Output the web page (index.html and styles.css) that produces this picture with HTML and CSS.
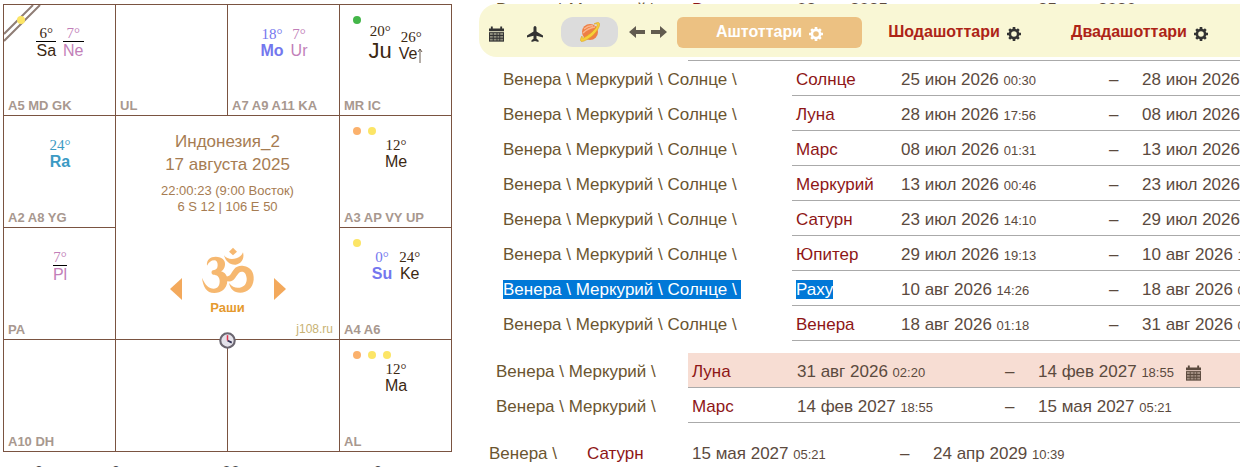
FILE: index.html
```
<!DOCTYPE html>
<html lang="ru">
<head>
  <meta charset="UTF-8">
  <meta name="viewport" content="width=device-width, initial-scale=1.0">
  <title>Индонезия_2</title>
  <link rel="stylesheet" href="styles.css">
</head>
<body>
  <svg class="sprite" aria-hidden="true">
    <symbol id="calendar" viewBox="0 0 16 16">
      <path d="M0 2h2V0h2v2h8V0h2v2h2v3H0z"/>
      <path d="M0 6h16v10H0z" opacity=".55"/>
      <path d="M0 6h1v10H0zM4 6h1v10H4zM8 6h1v10H8zM11 6h1v10h-1zM15 6h1v10h-1zM0 6h16v1H0zM0 9h16v1H0zM0 12h16v1H0zM0 15h16v1H0z"/>
    </symbol>
    <symbol id="gear" viewBox="0 0 16 16">
      <circle cx="8" cy="8" r="4.7" fill="none" stroke="currentColor" stroke-width="3"/>
      <path d="M8 0v3M8 13v3M0 8h3M13 8h3M2.500 2.500l2 2M11.500 11.500l2 2M13.500 2.500l-2 2M4.500 11.500l-2 2" stroke="currentColor" stroke-width="3"/>
    </symbol>
  </svg>

  <div class="page">
    <div class="left">
      <div class="chart">
        <div class="cell">
          <svg class="asc" viewBox="0 0 38 38"><path d="M0 29L29 0M0 36L36 0"/></svg>
          <div class="dots"><i class="yellow"></i></div>
          <div class="planets">
            <div class="planet retro"><span>6°</span><b>Sa</b></div>
            <div class="planet outer retro"><span>7°</span><b>Ne</b></div>
          </div>
          <div class="labels">A5 MD GK</div>
        </div>
        <div class="cell">
          <div class="labels">UL</div>
        </div>
        <div class="cell">
          <div class="planets">
            <div class="planet blue"><span>18°</span><b>Mo</b></div>
            <div class="planet outer"><span>7°</span><b>Ur</b></div>
          </div>
          <div class="labels">A7 A9 A11 KA</div>
        </div>
        <div class="cell">
          <div class="dots"><i class="green"></i></div>
          <div class="planets">
            <div class="planet big"><span>20°</span><b>Ju</b></div>
            <div class="planet"><span>26°</span><b>Ve<svg class="up" viewBox="0 0 6 16"><path d="M3 16V2M1 5l2-3 2 3"/></svg></b></div>
          </div>
          <div class="labels">MR IC</div>
        </div>
        <div class="cell">
          <div class="planets">
            <div class="planet teal"><span>24°</span><b>Ra</b></div>
          </div>
          <div class="labels">A2 A8 YG</div>
        </div>
        <div class="center">
          <div class="name">Индонезия_2<br>17 августа 2025</div>
          <div class="place">22:00:23 (9:00 Восток)<br>6 S 12 | 106 E 50</div>
          <div class="switch">
            <button aria-label="Назад"><svg width="12" height="22" viewBox="0 0 12 22"><path d="M12 0v22L0 11z"/></svg></button>
            <svg class="om" viewBox="30 20 162 141">
              <path d="M48 76C46 58 58 49 74 49C94 49 104 60 102 74C101 84 96 90 90 93C102 96 110 106 109 122C108 146 90 158 70 158C46 158 36 138 33 112C42 134 54 145 68 145C80 145 86 136 86 122C86 109 78 103 66 103C60 101 60 92 66 90C76 89 80 84 80 74C80 65 76 60 70 60C60 60 54 66 48 76Z"/>
              <path d="M104 108C118 110 120 98 128 88C136 78 146 75 158 77C178 79 190 96 188 118C186 142 168 157 148 157C128 157 118 146 114 128C124 140 134 144 146 142C160 140 168 130 167 114C166 101 160 93 152 94C140 95 136 112 126 120C118 125 110 124 106 121Z"/>
              <path d="M99 45C107 56 122 59 136 54C146 50 153 45 156 36C161 54 152 71 134 73C116 74 104 63 99 45Z"/>
              <path d="M126 22l12 12-12 11-12-11z"/>
            </svg>
            <button aria-label="Вперёд"><svg width="12" height="22" viewBox="0 0 12 22"><path d="M0 0v22l12-11z"/></svg></button>
          </div>
          <div class="varga">Раши</div>
          <div class="site">j108.ru</div>
          <svg class="clock" viewBox="0 0 16 16">
            <circle cx="8" cy="8" r="6.8" fill="#e4e2ea" stroke="#6b6670" stroke-width="2"/>
            <path d="M8 8l4 2" stroke="#333355" stroke-width="1.6"/>
            <path d="M8 8V3" stroke="#e0344c" stroke-width="1.4"/>
          </svg>
        </div>
        <div class="cell">
          <div class="dots"><i class="orange"></i><i class="yellow"></i></div>
          <div class="planets">
            <div class="planet"><span>12°</span><b>Me</b></div>
          </div>
          <div class="labels">A3 AP VY UP</div>
        </div>
        <div class="cell">
          <div class="planets">
            <div class="planet outer retro"><span>7°</span><b>Pl</b></div>
          </div>
          <div class="labels">PA</div>
        </div>
        <div class="cell">
          <div class="dots"><i class="yellow"></i></div>
          <div class="planets">
            <div class="planet blue"><span>0°</span><b>Su</b></div>
            <div class="planet"><span>24°</span><b>Ke</b></div>
          </div>
          <div class="labels">A4 A6</div>
        </div>
        <div class="cell">
          <div class="labels">A10 DH</div>
        </div>
        <div class="cell"></div>
        <div class="cell"></div>
        <div class="cell">
          <div class="dots"><i class="orange"></i><i class="yellow"></i><i class="yellow"></i></div>
          <div class="planets">
            <div class="planet"><span>12°</span><b>Ma</b></div>
          </div>
          <div class="labels">AL</div>
        </div>
      </div>
      <div class="below"><span>6</span><span>6</span><span>00</span><span>6</span></div>
    </div>

    <div class="right">
      <div class="toolbar">
        <button class="icon" aria-label="Календарь"><svg width="15" height="16"><use href="#calendar"/></svg></button>
        <button class="icon" aria-label="Транзиты"><svg width="16" height="16" viewBox="0 0 16 16"><path d="M8 0c1 0 1.500 1 1.500 2v3.500l6.500 4v2L9.500 9.700v3l2 1.600V16L8 15l-3.500 1v-1.700l2-1.600v-3L0 11.500v-2l6.500-4V2C6.500 1 7 0 8 0z"/></svg></button>
        <button class="saturn" aria-label="Планеты">
          <svg width="20" height="20" viewBox="0 0 20 20">
            <circle cx="10" cy="10" r="8" fill="#ee7f45"/>
            <path d="M4 7q5-4 9-3M3 11q5-5 12-6" stroke="#fab48a" stroke-width="1.500" fill="none"/>
            <path d="M14 2C18-.5 21 0 19 5C16 12 9 17 4 19C0 20.500-.5 18 2 14C2 16.500 3 16.500 6 14.500C11 11.500 15.500 7 17 4C18 2 16.500 1.500 14 2z" fill="#f6cf3a" stroke="#dfa51f" stroke-width=".6"/>
          </svg>
        </button>
        <div class="arrows">
          <button aria-label="Раньше"><svg width="16" height="12" viewBox="0 0 16 12"><path d="M0 6l7-6v4h9v4H7v4z"/></svg></button>
          <button aria-label="Позже"><svg width="16" height="12" viewBox="0 0 16 12"><path d="M16 6L9 0v4H0v4h9v4z"/></svg></button>
        </div>
        <button class="tab active">Аштоттари <svg width="14" height="14"><use href="#gear"/></svg></button>
        <button class="tab">Шодашоттари <svg width="14" height="14"><use href="#gear"/></svg></button>
        <button class="tab">Двадашоттари <svg width="14" height="14"><use href="#gear"/></svg></button>
      </div>

      <div class="periods">
        <table class="level2">
          <tr><td class="path">Венера \ Меркурий \</td><td class="lord">Венера</td><td class="from">02 авг 2025 <small>14:10</small></td><td class="dash">–</td><td>25 июн 2026 <small>00:30</small></td></tr>
          <tr><td class="path">Венера \ Меркурий \</td><td class="lord">Солнце</td><td class="from">25 июн 2026 <small>00:30</small></td><td class="dash">–</td><td>31 авг 2026 <small>02:20</small></td></tr>
        </table>
        <table class="level3">
          <tr><td class="path">Венера \ Меркурий \ Солнце \</td><td class="lord">Солнце</td><td class="from">25 июн 2026 <small>00:30</small></td><td class="dash">–</td><td>28 июн 2026 <small>17:56</small></td></tr>
          <tr><td class="path">Венера \ Меркурий \ Солнце \</td><td class="lord">Луна</td><td class="from">28 июн 2026 <small>17:56</small></td><td class="dash">–</td><td>08 июл 2026 <small>01:31</small></td></tr>
          <tr><td class="path">Венера \ Меркурий \ Солнце \</td><td class="lord">Марс</td><td class="from">08 июл 2026 <small>01:31</small></td><td class="dash">–</td><td>13 июл 2026 <small>00:46</small></td></tr>
          <tr><td class="path">Венера \ Меркурий \ Солнце \</td><td class="lord">Меркурий</td><td class="from">13 июл 2026 <small>00:46</small></td><td class="dash">–</td><td>23 июл 2026 <small>14:10</small></td></tr>
          <tr><td class="path">Венера \ Меркурий \ Солнце \</td><td class="lord">Сатурн</td><td class="from">23 июл 2026 <small>14:10</small></td><td class="dash">–</td><td>29 июл 2026 <small>19:13</small></td></tr>
          <tr><td class="path">Венера \ Меркурий \ Солнце \</td><td class="lord">Юпитер</td><td class="from">29 июл 2026 <small>19:13</small></td><td class="dash">–</td><td>10 авг 2026 <small>14:26</small></td></tr>
          <tr><td class="path"><span class="selected">Венера \ Меркурий \ Солнце \&nbsp;</span></td><td class="lord"><span class="selected">Раху</span></td><td class="from">10 авг 2026 <small>14:26</small></td><td class="dash">–</td><td>18 авг 2026 <small>01:18</small></td></tr>
          <tr><td class="path">Венера \ Меркурий \ Солнце \</td><td class="lord">Венера</td><td class="from">18 авг 2026 <small>01:18</small></td><td class="dash">–</td><td>31 авг 2026 <small>02:20</small></td></tr>
        </table>
        <table class="level2">
          <tr class="current"><td class="path">Венера \ Меркурий \</td><td class="lord">Луна</td><td class="from">31 авг 2026 <small>02:20</small></td><td class="dash">–</td><td>14 фев 2027 <small>18:55</small><svg class="cal" width="15" height="16"><use href="#calendar"/></svg></td></tr>
          <tr><td class="path">Венера \ Меркурий \</td><td class="lord">Марс</td><td class="from">14 фев 2027 <small>18:55</small></td><td class="dash">–</td><td>15 мая 2027 <small>05:21</small></td></tr>
        </table>
        <table class="level1">
          <tr><td class="path">Венера \</td><td class="lord">Сатурн</td><td class="from">15 мая 2027 <small>05:21</small></td><td class="dash">–</td><td>24 апр 2029 <small>10:39</small></td></tr>
        </table>
      </div>
    </div>
  </div>
</body>
</html>
```
FILE: styles.css
```
* {
  box-sizing: border-box;
}
body {
  margin: 0;
  font-family: Arial, "Liberation Sans", sans-serif;
  background: #fff;
}
button {
  padding: 0;
  border: none;
  background: none;
  font: inherit;
  color: inherit;
  cursor: pointer;
}
svg {
  fill: currentColor;
}
.sprite {
  display: none;
}
.page {
  display: flex;
  height: 100vh;
  overflow: hidden;
}

/* chart */
.left {
  flex: none;
  padding: 4px 27px 0 3px;
}
.chart {
  display: grid;
  grid-template-columns: repeat(4, 112px);
  grid-template-rows: 111px repeat(3, 112px);
  border-top: 1px solid #7a5341;
  border-left: 1px solid #7a5341;
}
.cell,
.center {
  position: relative;
  display: flex;
  flex-direction: column;
  border-right: 1px solid #7a5341;
  border-bottom: 1px solid #7a5341;
}
.asc {
  position: absolute;
  top: 0;
  left: 0;
  width: 38px;
  height: 38px;
  fill: none;
  stroke: #8f7d75;
  stroke-width: 2;
}
.dots {
  position: absolute;
  top: 11px;
  left: 13px;
  display: flex;
  gap: 7px;
}
.dots i {
  width: 8px;
  height: 8px;
  border-radius: 50%;
}
.yellow {
  background: #fce566;
}
.green {
  background: #43b649;
}
.orange {
  background: #fbb16c;
}
.planets {
  flex: 1;
  display: flex;
  flex-wrap: wrap;
  justify-content: center;
  align-content: center;
  align-items: flex-end;
  gap: 7px;
  padding: 0 0 18px 1px;
}
.planet {
  color: #3b2812;
  text-align: center;
}
.planet span {
  display: block;
  height: 16px;
  font: 15px/16px Georgia, "Liberation Serif", serif;
}
.planet b {
  display: block;
  font-size: 16px;
  line-height: 18px;
  font-weight: normal;
}
.planet.big b {
  font-size: 22px;
  line-height: 24px;
}
.planet.retro b {
  border-top: 1px solid #000;
}
.planet.outer {
  color: #c27fb9;
}
.planet.blue {
  color: #7477ee;
}
.planet.teal {
  color: #3b9ac4;
}
.planet.blue b,
.planet.teal b {
  font-weight: bold;
}
.up {
  width: 6px;
  height: 16px;
  vertical-align: -4px;
  fill: none;
  stroke: #6b5c50;
}
.labels {
  margin-top: auto;
  padding: 0 4px 2px;
  font-size: 13px;
  line-height: 15px;
  font-weight: bold;
  color: #a8988f;
}
.center {
  z-index: 1;
  grid-column: 2 / 4;
  grid-row: 2 / 4;
  padding: 14px 6px 2px;
  text-align: center;
  color: #a67c52;
}
.name {
  font-size: 17px;
  line-height: 23px;
}
.place {
  margin-top: 7px;
  font-size: 13px;
  line-height: 16px;
}
.switch {
  display: flex;
  justify-content: center;
  align-items: flex-end;
  gap: 19px;
  margin-top: 32px;
  color: #f3a95c;
}
.switch button {
  height: 22px;
  margin-bottom: -6px;
}
.switch svg {
  display: block;
}
.switch .om {
  width: 54px;
  height: 47px;
  color: #f6b870;
}
.varga {
  margin-top: 6px;
  font-size: 13px;
  line-height: 16px;
  font-weight: bold;
  color: #e59a2f;
}
.site {
  margin-top: auto;
  font-size: 12px;
  line-height: 15px;
  text-align: right;
  color: #c8b273;
}
.clock {
  position: absolute;
  left: 103px;
  bottom: -10px;
  width: 17px;
  height: 17px;
}
.below {
  display: grid;
  grid-template-columns: 77px 111px 151px 1fr;
  padding: 12px 31px 0;
  font-size: 16px;
  line-height: 18px;
  color: #444;
}

/* periods */
.right {
  position: relative;
  flex: 1;
  min-width: 0;
  overflow: hidden;
}
.toolbar {
  position: absolute;
  top: 4px;
  left: 0;
  right: 0;
  display: flex;
  align-items: center;
  height: 53px;
  padding: 3px 8px 0 10px;
  border-radius: 18px 0 0 18px;
  background: #f9f7d5;
  color: #333;
  overflow: hidden;
}
.toolbar button {
  flex: none;
}
.toolbar svg {
  display: block;
}
.icon {
  margin: 4px 23px 0 0;
}
.saturn {
  display: flex;
  justify-content: center;
  align-items: center;
  width: 57px;
  height: 30px;
  margin: 0 11px 0 -5px;
  border-radius: 12px;
  background: #dcdcdc;
}
.arrows {
  display: flex;
  gap: 6px;
  margin-right: 10px;
  color: #625c50;
}
.tab {
  display: flex;
  justify-content: center;
  align-items: center;
  gap: 7px;
  width: 185px;
  height: 31px;
  border-radius: 6px;
  font-size: 16px;
  font-weight: bold;
  color: #ad2417;
}
.tab svg {
  margin-top: 3px;
  color: #333;
}
.tab.active {
  background: #ecc182;
  color: #fff;
}
.tab.active svg {
  color: #fff;
}
.periods {
  margin-top: -9px;
  padding-left: 10px;
}
table {
  width: 100%;
  table-layout: fixed;
  border-collapse: separate;
  border-spacing: 0;
  font-size: 17px;
  color: #5b4a3e;
}
td {
  height: 35px;
  padding: 3px 0 0 4px;
  border-bottom: 1px solid #aaa;
  white-space: nowrap;
}
td.path {
  padding-left: 0;
  border-color: transparent;
  color: #6b5530;
}
.lord {
  width: 105px;
  color: #8e1616;
}
.from {
  width: 208px;
}
.dash {
  width: 33px;
}
small {
  font-size: 13px;
}
td.path {
  width: 94px;
}
.level2 td.path {
  width: 199px;
  padding-left: 7px;
}
.level3 td.path {
  width: 303px;
  padding-left: 14px;
}
.level3 + .level2,
.level2 + .level1 {
  margin-top: 12px;
}
.current td:not(.path) {
  background: #f7ddd3;
}
.selected {
  background: #0078d7;
  color: #fff;
}
.cal {
  margin-left: 12px;
  vertical-align: -4px;
}
```
